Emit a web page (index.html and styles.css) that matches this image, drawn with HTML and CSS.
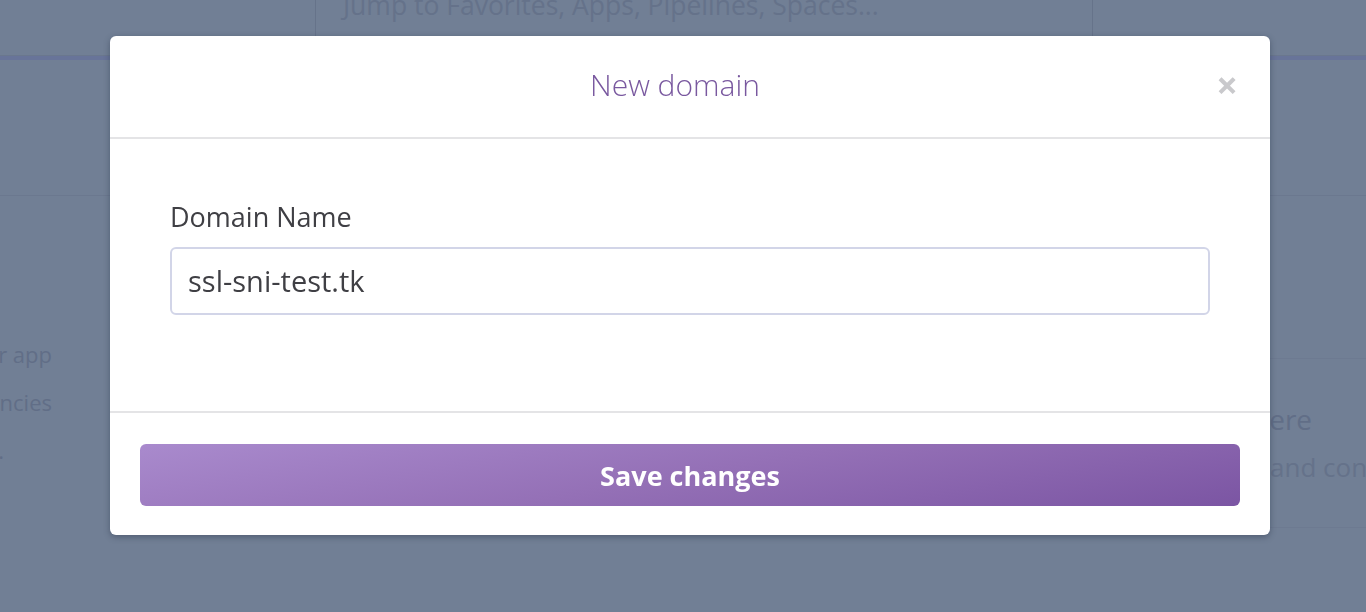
FILE: index.html
```html
<!DOCTYPE html>
<html>
<head>
<meta charset="utf-8">
<link rel="stylesheet" href="styles.css">
</head>
<body>
<div class="page">
  <header class="topbar">
    <div class="topbar-left"></div>
    <div class="search"><span class="search-text">Jump to Favorites, Apps, Pipelines, Spaces...</span></div>
    <div class="topbar-right"></div>
  </header>
  <div class="subbar"></div>
  <div class="content">
    <div class="side">
      <div class="side-item">your app</div>
      <div class="side-item">dependencies</div>
      <div class="side-item">.</div>
    </div>
    <div class="main"></div>
    <div class="card">
      <div class="card-title">here</div>
      <div class="card-text">and connect</div>
    </div>
  </div>
</div>

<div class="overlay">
  <div class="modal">
    <div class="modal-header">
      <h2 class="modal-title">New domain</h2>
      <span class="modal-close">&times;</span>
    </div>
    <div class="modal-body">
      <label class="field-label">Domain Name</label>
      <div class="field-input">ssl-sni-test.tk</div>
    </div>
    <div class="modal-footer">
      <button class="btn-save">Save changes</button>
    </div>
  </div>
</div>
</body>
</html>
```

FILE: styles.css
```css
* { box-sizing: border-box; }
html, body { margin: 0; padding: 0; }
body {
  width: 1366px;
  height: 612px;
  overflow: hidden;
  background: #717f95;
  font-family: "Open Sans", Lato, "Liberation Sans", sans-serif;
  color: #606d86;
}
.page { display: flex; flex-direction: column; height: 612px; overflow: hidden; }
.topbar {
  display: flex;
  height: 56px;
  border-bottom: 1px solid #6a778e;
}
.topbar-left { width: 315px; }
.search {
  width: 778px;
  border-left: 1px solid #66738a;
  border-right: 1px solid #66738a;
  padding-left: 27px;
  overflow: hidden;
}
.search-text {
  display: block;
  margin-top: -13px;
  font-size: 26.5px;
  color: #65728a;
  white-space: nowrap;
}
.topbar-right { flex: 1; }
.subbar {
  height: 4px;
  background: #67729a;
  opacity: 0.8;
}
.content {
  position: relative;
  display: flex;
  flex: 1;
}
.content::before {
  content: "";
  position: absolute;
  left: 0;
  right: 0;
  top: 135px;
  border-top: 1px solid #6b788f;
}
.side {
  flex: none;
  width: 52px;
  padding-top: 279px;
  display: flex;
  flex-direction: column;
  align-items: flex-end;
  gap: 18px;
  overflow: hidden;
}
.side-item { font-size: 22px; line-height: 30px; color: #616e87; white-space: nowrap; }
.side-item:last-child { margin-right: 48px; }
.main { flex: 1; }
.card {
  flex: none;
  width: 130px;
  margin-top: 298px;
  height: 170px;
  border-top: 1px solid #6d7a91;
  border-bottom: 1px solid #6d7a91;
  padding: 42px 0 0 34px;
  white-space: nowrap;
}
.card-title { font-size: 28px; color: #616e87; line-height: 36px; margin-left: -18px; }
.card-text { font-size: 26px; color: #65728a; margin-top: 12px; line-height: 36px; }

.overlay {
  position: fixed;
  inset: 0;
}
.modal {
  position: absolute;
  left: 110px;
  top: 36px;
  width: 1160px;
  height: 499px;
  background: #fff;
  border-radius: 6px;
  box-shadow: 0 2px 6px rgba(40, 50, 70, 0.45);
  display: flex;
  flex-direction: column;
}
.modal-header {
  position: relative;
  height: 103px;
  border-bottom: 2px solid #e4e4e6;
  display: flex;
  align-items: center;
  justify-content: center;
  padding-right: 30px;
}
.modal-title {
  margin: 0;
  font-weight: 300;
  font-size: 30px;
  color: #79589f;
  margin-top: -4px;
}
.modal-close {
  position: absolute;
  right: 32px;
  top: 28px;
  font-size: 38px;
  line-height: 40px;
  color: #c9c9cc;
  font-weight: 700;
}
.modal-body {
  height: 274px;
  border-bottom: 2px solid #e4e4e6;
  padding: 60px 60px 0;
}
.field-label {
  display: block;
  font-size: 27px;
  color: #3f3f44;
  line-height: 36px;
}
.field-input {
  margin-top: 12px;
  height: 68px;
  border: 2px solid #d2d5e8;
  border-radius: 6px;
  padding: 0 16px;
  font-size: 29px;
  line-height: 64px;
  color: #3f3f44;
}
.modal-footer {
  padding: 31px 30px 0;
}
.btn-save {
  display: block;
  width: 100%;
  height: 62px;
  border: 0;
  border-radius: 6px;
  background: linear-gradient(170deg, #a98acd 0%, #9470b6 50%, #7b55a3 100%);
  color: #fff;
  font-family: "Open Sans", Lato, "Liberation Sans", sans-serif;
  font-weight: 700;
  font-size: 27px;
  padding: 0;
}
```
